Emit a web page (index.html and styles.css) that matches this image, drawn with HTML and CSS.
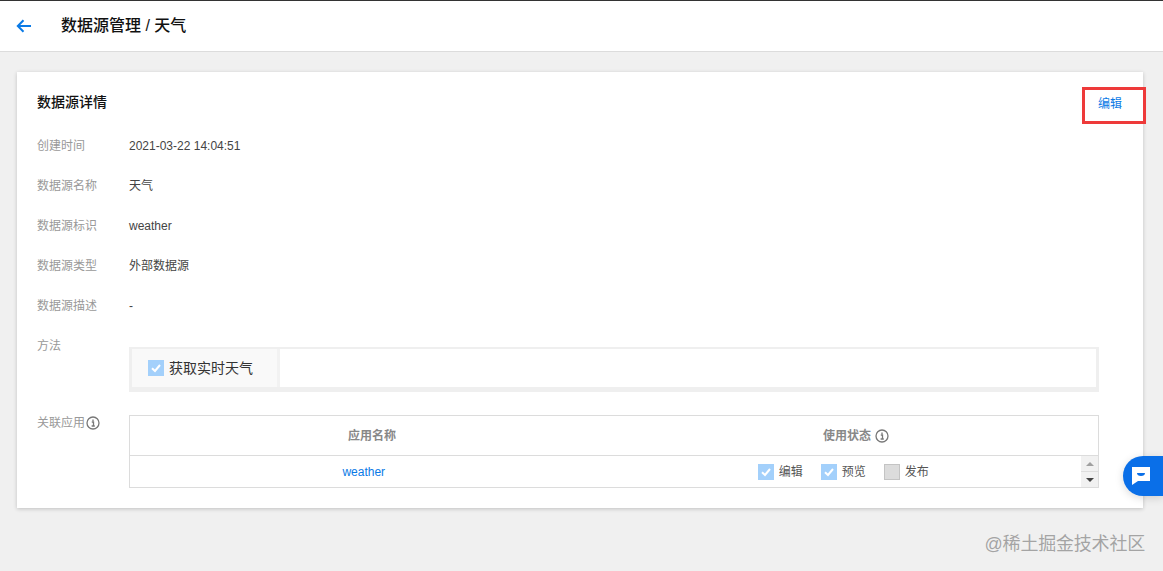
FILE: index.html
```html
<!DOCTYPE html>
<html lang="zh-CN">
<head>
<meta charset="UTF-8">
<title>数据源管理 / 天气</title>
<link rel="stylesheet" href="styles.css">
</head>
<body>
<header class="topbar">
	<svg class="back" width="16" height="14" viewBox="0 0 16 14"><path d="M15 7H2M7.500 1.200L1.800 7l5.700 5.800" fill="none" stroke="#0a7ae6" stroke-width="2"/></svg>
	<h1>数据源管理 / 天气</h1>
</header>
<main class="card">
	<div class="card-head">
		<h2>数据源详情</h2>
		<a class="link edit">编辑</a>
	</div>
	<div class="row"><div class="label">创建时间</div><div class="value">2021-03-22 14:04:51</div></div>
	<div class="row"><div class="label">数据源名称</div><div class="value">天气</div></div>
	<div class="row"><div class="label">数据源标识</div><div class="value">weather</div></div>
	<div class="row"><div class="label">数据源类型</div><div class="value">外部数据源</div></div>
	<div class="row"><div class="label">数据源描述</div><div class="value">-</div></div>
	<div class="row row-method">
		<div class="label">方法</div>
		<div class="tabs">
			<div class="tab">
				<span class="check on"><svg width="16" height="16" viewBox="0 0 16 16"><path d="M4 8.200l3 2.800 5-6" fill="none" stroke="#fff" stroke-width="2"/></svg></span>
				获取实时天气
			</div>
			<div class="tab-rest"></div>
		</div>
	</div>
	<div class="row row-apps">
		<div class="label">关联应用<svg class="info" width="14" height="14" viewBox="0 0 14 14"><circle cx="7" cy="7" r="6" fill="none" stroke="#777" stroke-width="1.300"/><path d="M5.800 6h1.700v3.600M5.600 10h3.200M7 3.400v1.500" fill="none" stroke="#777" stroke-width="1.300"/></svg></div>
		<div class="apps">
			<div class="apps-head">
				<div>应用名称</div>
				<div>使用状态<svg class="info" width="14" height="14" viewBox="0 0 14 14"><circle cx="7" cy="7" r="6" fill="none" stroke="#777" stroke-width="1.300"/><path d="M5.800 6h1.700v3.600M5.600 10h3.200M7 3.400v1.500" fill="none" stroke="#777" stroke-width="1.300"/></svg></div>
			</div>
			<div class="apps-body">
				<div class="apps-row">
					<div class="app-name"><a class="link">weather</a></div>
					<div class="states">
						<span class="state"><span class="check on"><svg width="16" height="16" viewBox="0 0 16 16"><path d="M4 8.200l3 2.800 5-6" fill="none" stroke="#fff" stroke-width="2"/></svg></span>编辑</span>
						<span class="state"><span class="check on"><svg width="16" height="16" viewBox="0 0 16 16"><path d="M4 8.200l3 2.800 5-6" fill="none" stroke="#fff" stroke-width="2"/></svg></span>预览</span>
						<span class="state"><span class="check"></span>发布</span>
					</div>
				</div>
				<div class="scrollbar">
					<span class="arrow up"></span>
					<span class="arrow down"></span>
				</div>
			</div>
		</div>
	</div>
</main>
<div class="mark-box"></div>
<div class="chat">
	<svg width="18" height="18" viewBox="0 0 18 18"><path d="M0 0h18v14H6l-6 4z" fill="#fff"/><path d="M5 6h8c0 2-1.500 3-4 3S5 8 5 6z" fill="#0a6fe8"/></svg>
</div>
<div class="watermark">@稀土掘金技术社区</div>
</body>
</html>
```

FILE: styles.css
```css
html, body
{	margin:0;
	height:100%;
	overflow:hidden;
}
body
{	background-color:#f0f0f0;
	font-family:"Liberation Sans", "Noto Sans CJK SC", sans-serif;
	font-size:12px;
	color:#444;
}
h1, h2
{	margin:0;
}
.topbar
{	display:flex;
	align-items:center;
	height:50px;
	background-color:white;
	border-top:1px solid #333;
	border-bottom:1px solid #dcdcdc;
}
.back
{	margin-left:16px;
}
.topbar h1
{	margin:0 0 4px 29px;
	font-size:16px;
	font-weight:500;
	color:#111;
}
.card
{	margin:20px 20px 0 17px;
	padding:20px 44px 20px 20px;
	height:396px;
	background-color:white;
	box-shadow:0 1px 4px rgba(0,0,0,0.2);
}
.card-head
{	display:flex;
	justify-content:space-between;
	align-items:center;
	height:20px;
	margin-bottom:24px;
}
.card-head h2
{	font-size:14px;
	font-weight:500;
	line-height:20px;
	color:#111;
}
.link
{	color:#0a7ae6;
}
.edit
{	margin-right:-23px;
}
.row
{	display:flex;
	line-height:20px;
	margin-bottom:20px;
}
.label
{	flex:none;
	width:92px;
	color:#999;
	display:flex;
	align-items:flex-start;
}
.label .info
{	margin:3px 0 0 1px;
}
.value
{	color:#444;
}
.row-method
{	margin-bottom:21px;
}
.tabs
{	flex:1;
	display:flex;
	margin-top:11px;
	height:38px;
	border-style:solid;
	border-color:#efefef;
	border-width:2px 3px 5px 3px;
}
.tab
{	display:flex;
	align-items:center;
	box-sizing:border-box;
	width:148px;
	padding-left:16px;
	background-color:#f9f9f9;
	border-right:3px solid #f2f2f2;
	font-size:14px;
	color:#333;
}
.tab .check
{	margin-right:5px;
}
.tab-rest
{	flex:1;
	background-color:white;
}
.check
{	flex:none;
	display:inline-block;
	width:16px;
	height:16px;
	box-sizing:border-box;
	background-color:#dcdcdc;
	border:1px solid #c4c4c4;
}
.check.on
{	background-color:#a3d0fb;
	border:0;
}
.check svg
{	display:block;
}
.row-apps
{	margin-bottom:0;
}
.apps
{	flex:1;
	margin-top:2px;
	border:1px solid #dcdcdc;
}
.apps-head
{	display:grid;
	grid-template-columns:1fr 1fr;
	height:39px;
	line-height:41px;
	text-align:center;
	font-weight:700;
	color:#888;
	border-bottom:1px solid #dcdcdc;
}
.apps-head .info
{	margin-left:4px;
	vertical-align:-3px;
}
.apps-body
{	display:flex;
	height:31px;
}
.apps-row
{	flex:1;
	display:grid;
	grid-template-columns:1fr 1fr;
	align-items:center;
	text-align:center;
}
.app-name
{	padding-right:8px;
}
.states
{	display:flex;
	justify-content:center;
	gap:18px;
}
.state
{	display:flex;
	align-items:center;
	gap:5px;
	color:#555;
}
.scrollbar
{	flex:none;
	width:17px;
	display:flex;
	flex-direction:column;
	background-color:#f1f1f1;
}
.arrow
{	flex:1;
	display:flex;
	align-items:center;
	justify-content:center;
}
.arrow:before
{	content:"";
	border-left:4px solid transparent;
	border-right:4px solid transparent;
}
.arrow.up
{	border-bottom:1px solid #ddd;
}
.arrow.up:before
{	border-bottom:4px solid #a0a0a0;
}
.arrow.down:before
{	border-top:4px solid #444;
}
.mark-box
{	position:absolute;
	left:1082px;
	top:87px;
	width:58px;
	height:31px;
	border:3px solid #ee3a3a;
}
.chat
{	position:absolute;
	right:0;
	top:456px;
	width:40px;
	height:40px;
	display:flex;
	align-items:center;
	justify-content:center;
	box-sizing:border-box;
	padding-right:4px;
	background-color:#0a6fe8;
	border-radius:20px 0 0 20px;
	box-shadow:0 2px 8px rgba(0,0,0,0.15);
}
.chat svg
{	display:block;
}
.watermark
{	position:absolute;
	right:18px;
	top:532px;
	font-size:18px;
	line-height:24px;
	letter-spacing:-0.2px;
	color:rgba(130,130,130,0.7);
}
```
